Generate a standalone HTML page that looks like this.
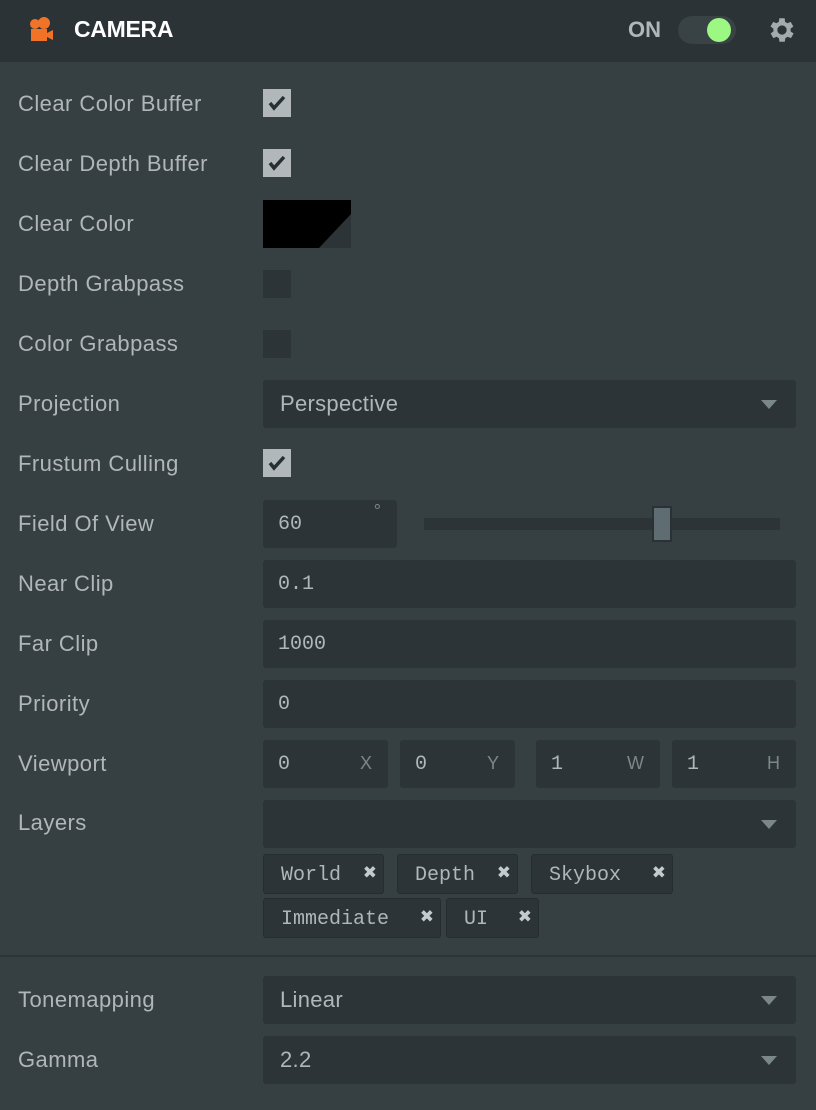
<!DOCTYPE html>
<html><head><style>
*{margin:0;padding:0;box-sizing:border-box}
body{width:816px;height:1110px;background:#364043;font-family:"Liberation Sans",sans-serif;position:relative;overflow:hidden}
.hdr{position:absolute;left:0;top:0;width:816px;height:62px;background:#2c3337}
.t{position:absolute;left:74px;top:16px;color:#fff;font-weight:bold;font-size:23px;letter-spacing:-0.3px}
.lbl{position:absolute;left:18px;color:#b1b6b8;font-size:22px;line-height:24px;letter-spacing:0.45px}
.cb{position:absolute;left:263px;width:28px;height:28px;background:#2c3437}
.cb.on{background:#b2b7b9}
.cb.on svg{position:absolute;left:5px;top:6px}
.in{position:absolute;left:263px;width:533px;height:48px;background:#2c3437;border-radius:3px;color:#b1b6b8;font-family:"Liberation Mono",monospace;font-size:20px;line-height:50px;padding-left:15px}
.sel{font-family:"Liberation Sans",sans-serif;font-size:22px;padding-left:17px;letter-spacing:0.3px;line-height:48px}
.arr{position:absolute;right:19px;top:20px;width:0;height:0;border-left:8px solid transparent;border-right:8px solid transparent;border-top:9px solid #7b878b}
.sm{position:absolute;color:#7b878b;font-size:18px;font-family:"Liberation Sans",sans-serif;line-height:46px;top:0}
.tag{position:absolute;height:40px;background:#2c3437;border:1px solid #262d30;border-radius:3px;color:#b1b6b8;font-family:"Liberation Mono",monospace;font-size:20px;line-height:42px;padding-left:17px}
.tag b{position:absolute;right:6px;top:-3px;font-family:"DejaVu Sans",sans-serif;font-size:17px;color:#c5cacc}
</style></head><body>
<div class="hdr">
<svg style="position:absolute;left:28px;top:16px" width="28" height="28" viewBox="0 0 28 28"><circle cx="7" cy="8" r="5" fill="#f07328"/><circle cx="16" cy="7" r="6" fill="#f07328"/><rect x="3" y="13" width="16" height="12" fill="#f07328"/><path d="M19 17l6-3v10l-6-3z" fill="#f07328"/></svg>
<div class="t">CAMERA</div>
<div style="position:absolute;left:628px;top:17px;color:#b1b6b8;font-weight:bold;font-size:22px">ON</div>
<div style="position:absolute;left:678px;top:16px;width:58px;height:28px;border-radius:14px;background:#394245"></div>
<div style="position:absolute;left:707px;top:18px;width:24px;height:24px;border-radius:12px;background:#9cf783"></div>
<svg style="position:absolute;left:766px;top:14px" width="32" height="32" viewBox="0 0 24 24"><path fill="#a5abad" d="M19.4 13a7.5 7.5 0 000-2l2.1-1.6-2-3.5-2.5 1a7.6 7.6 0 00-1.7-1L15 3.2h-4l-.4 2.7a7.6 7.6 0 00-1.7 1l-2.5-1-2 3.5L6.6 11a7.5 7.5 0 000 2l-2.1 1.6 2 3.5 2.5-1c.5.4 1.1.7 1.7 1l.4 2.7h4l.4-2.7c.6-.3 1.2-.6 1.7-1l2.5 1 2-3.5zM13 15.5a3.5 3.5 0 110-7 3.5 3.5 0 010 7z" transform="translate(-1 0)"/></svg>
</div>

<div class="lbl" style="top:92px">Clear Color Buffer</div>
<div class="cb on" style="top:89px"><svg width="18" height="16" viewBox="0 0 18 16"><path d="M2 8l4 5 10-11" stroke="#263034" stroke-width="3.5" fill="none"/></svg></div>
<div class="lbl" style="top:152px">Clear Depth Buffer</div>
<div class="cb on" style="top:149px"><svg width="18" height="16" viewBox="0 0 18 16"><path d="M2 8l4 5 10-11" stroke="#263034" stroke-width="3.5" fill="none"/></svg></div>
<div class="lbl" style="top:212px">Clear Color</div>
<svg style="position:absolute;left:263px;top:200px" width="88" height="48"><rect width="88" height="48" fill="#000"/><path d="M88 14V48H56z" fill="#2c3437"/></svg>
<div class="lbl" style="top:272px">Depth Grabpass</div>
<div class="cb" style="top:270px"></div>
<div class="lbl" style="top:332px">Color Grabpass</div>
<div class="cb" style="top:330px"></div>
<div class="lbl" style="top:392px">Projection</div>
<div class="in sel" style="top:380px">Perspective<div class="arr"></div></div>
<div class="lbl" style="top:452px">Frustum Culling</div>
<div class="cb on" style="top:449px"><svg width="18" height="16" viewBox="0 0 18 16"><path d="M2 8l4 5 10-11" stroke="#263034" stroke-width="3.5" fill="none"/></svg></div>
<div class="lbl" style="top:512px">Field Of View</div>
<div class="in" style="top:500px;width:134px">60<span class="sm" style="right:16px;top:-12px">°</span></div>
<div style="position:absolute;left:424px;top:518px;width:356px;height:12px;background:#2c3437"></div>
<div style="position:absolute;left:652px;top:506px;width:20px;height:36px;background:#5f6d73;border:2px solid #2a3235"></div>
<div class="lbl" style="top:572px">Near Clip</div>
<div class="in" style="top:560px">0.1</div>
<div class="lbl" style="top:632px">Far Clip</div>
<div class="in" style="top:620px">1000</div>
<div class="lbl" style="top:692px">Priority</div>
<div class="in" style="top:680px">0</div>
<div class="lbl" style="top:752px">Viewport</div>
<div class="in" style="top:740px;width:125px">0<span class="sm" style="right:16px">X</span></div>
<div class="in" style="top:740px;left:400px;width:115px">0<span class="sm" style="right:16px">Y</span></div>
<div class="in" style="top:740px;left:536px;width:124px">1<span class="sm" style="right:16px">W</span></div>
<div class="in" style="top:740px;left:672px;width:124px">1<span class="sm" style="right:16px">H</span></div>
<div class="lbl" style="top:811px">Layers</div>
<div class="in" style="top:800px"><div class="arr"></div></div>
<div class="tag" style="left:263px;top:854px;width:121px">World<b>✖</b></div>
<div class="tag" style="left:397px;top:854px;width:121px">Depth<b>✖</b></div>
<div class="tag" style="left:531px;top:854px;width:142px">Skybox<b>✖</b></div>
<div class="tag" style="left:263px;top:898px;width:178px">Immediate<b>✖</b></div>
<div class="tag" style="left:446px;top:898px;width:93px">UI<b>✖</b></div>
<div style="position:absolute;left:0;top:955px;width:816px;height:2px;background:#2c3437"></div>
<div class="lbl" style="top:988px">Tonemapping</div>
<div class="in sel" style="top:976px">Linear<div class="arr"></div></div>
<div class="lbl" style="top:1048px">Gamma</div>
<div class="in sel" style="top:1036px">2.2<div class="arr"></div></div>
</body></html>
